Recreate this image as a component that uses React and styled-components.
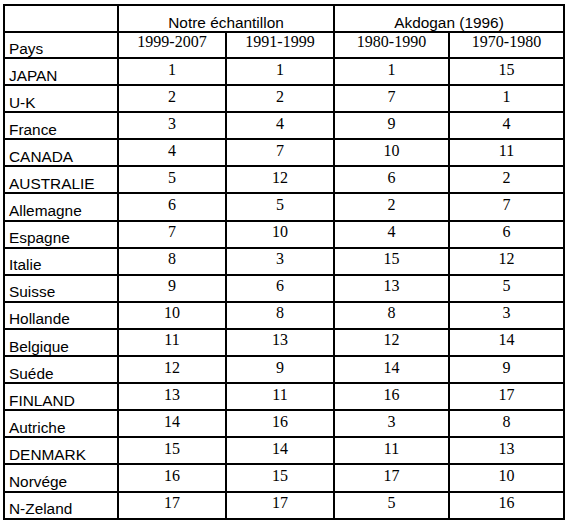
import React from "react";
import styled, { createGlobalStyle } from "styled-components";

const Global = createGlobalStyle`
  html, body { margin: 0; padding: 0; background: #fff; }
  body { font-family: "Liberation Sans", Arial, sans-serif; color: #000; }
`;

const Page = styled.div`
  padding: 4px 0 0 3px;
`;

const Grid = styled.div`
  display: inline-grid;
  grid-template-columns: 112px 106px 106px 113px 113px;
  grid-template-rows: 25px 24px;
  grid-auto-rows: 25.1px;
  gap: 2px;
  padding: 2px;
  background: #000;
`;

const Cell = styled.div`
  background: #fff;
  display: flex;
  overflow: hidden;
  grid-column: ${(p) => (p.$span ? `span ${p.$span}` : "auto")};
  justify-content: ${(p) => (p.$left ? "flex-start" : "center")};
  align-items: ${(p) => (p.$serif ? "flex-start" : "flex-end")};
  font-family: ${(p) =>
    p.$serif
      ? '"Liberation Serif", "Times New Roman", serif'
      : '"Liberation Sans", Arial, sans-serif'};
  font-size: ${(p) => (p.$serif ? "16px" : "15.4px")};
  line-height: ${(p) => (p.$serif ? "16px" : "15px")};
  padding-left: ${(p) => (p.$left ? "4px" : "0")};
  padding-top: ${(p) => (p.$serif ? (p.$head ? "1px" : "2.5px") : "0")};
  padding-bottom: ${(p) => (p.$serif ? "0" : "1.5px")};
  white-space: nowrap;
`;

const rows = [
  ["JAPAN", 1, 1, 1, 15],
  ["U-K", 2, 2, 7, 1],
  ["France", 3, 4, 9, 4],
  ["CANADA", 4, 7, 10, 11],
  ["AUSTRALIE", 5, 12, 6, 2],
  ["Allemagne", 6, 5, 2, 7],
  ["Espagne", 7, 10, 4, 6],
  ["Italie", 8, 3, 15, 12],
  ["Suisse", 9, 6, 13, 5],
  ["Hollande", 10, 8, 8, 3],
  ["Belgique", 11, 13, 12, 14],
  ["Suéde", 12, 9, 14, 9],
  ["FINLAND", 13, 11, 16, 17],
  ["Autriche", 14, 16, 3, 8],
  ["DENMARK", 15, 14, 11, 13],
  ["Norvége", 16, 15, 17, 10],
  ["N-Zeland", 17, 17, 5, 16],
];

const years = ["1999-2007", "1991-1999", "1980-1990", "1970-1980"];

export default function App() {
  return (
    <>
      <Global />
      <Page>
        <Grid>
          <Cell $left />
          <Cell $span={2}>Notre échantillon</Cell>
          <Cell $span={2}>Akdogan (1996)</Cell>
          <Cell $left>Pays</Cell>
          {years.map((y) => (
            <Cell key={y} $serif $head>
              {y}
            </Cell>
          ))}
          {rows.map(([name, ...vals]) => (
            <React.Fragment key={name}>
              <Cell $left>{name}</Cell>
              {vals.map((v, i) => (
                <Cell key={i} $serif>
                  {v}
                </Cell>
              ))}
            </React.Fragment>
          ))}
        </Grid>
      </Page>
    </>
  );
}
